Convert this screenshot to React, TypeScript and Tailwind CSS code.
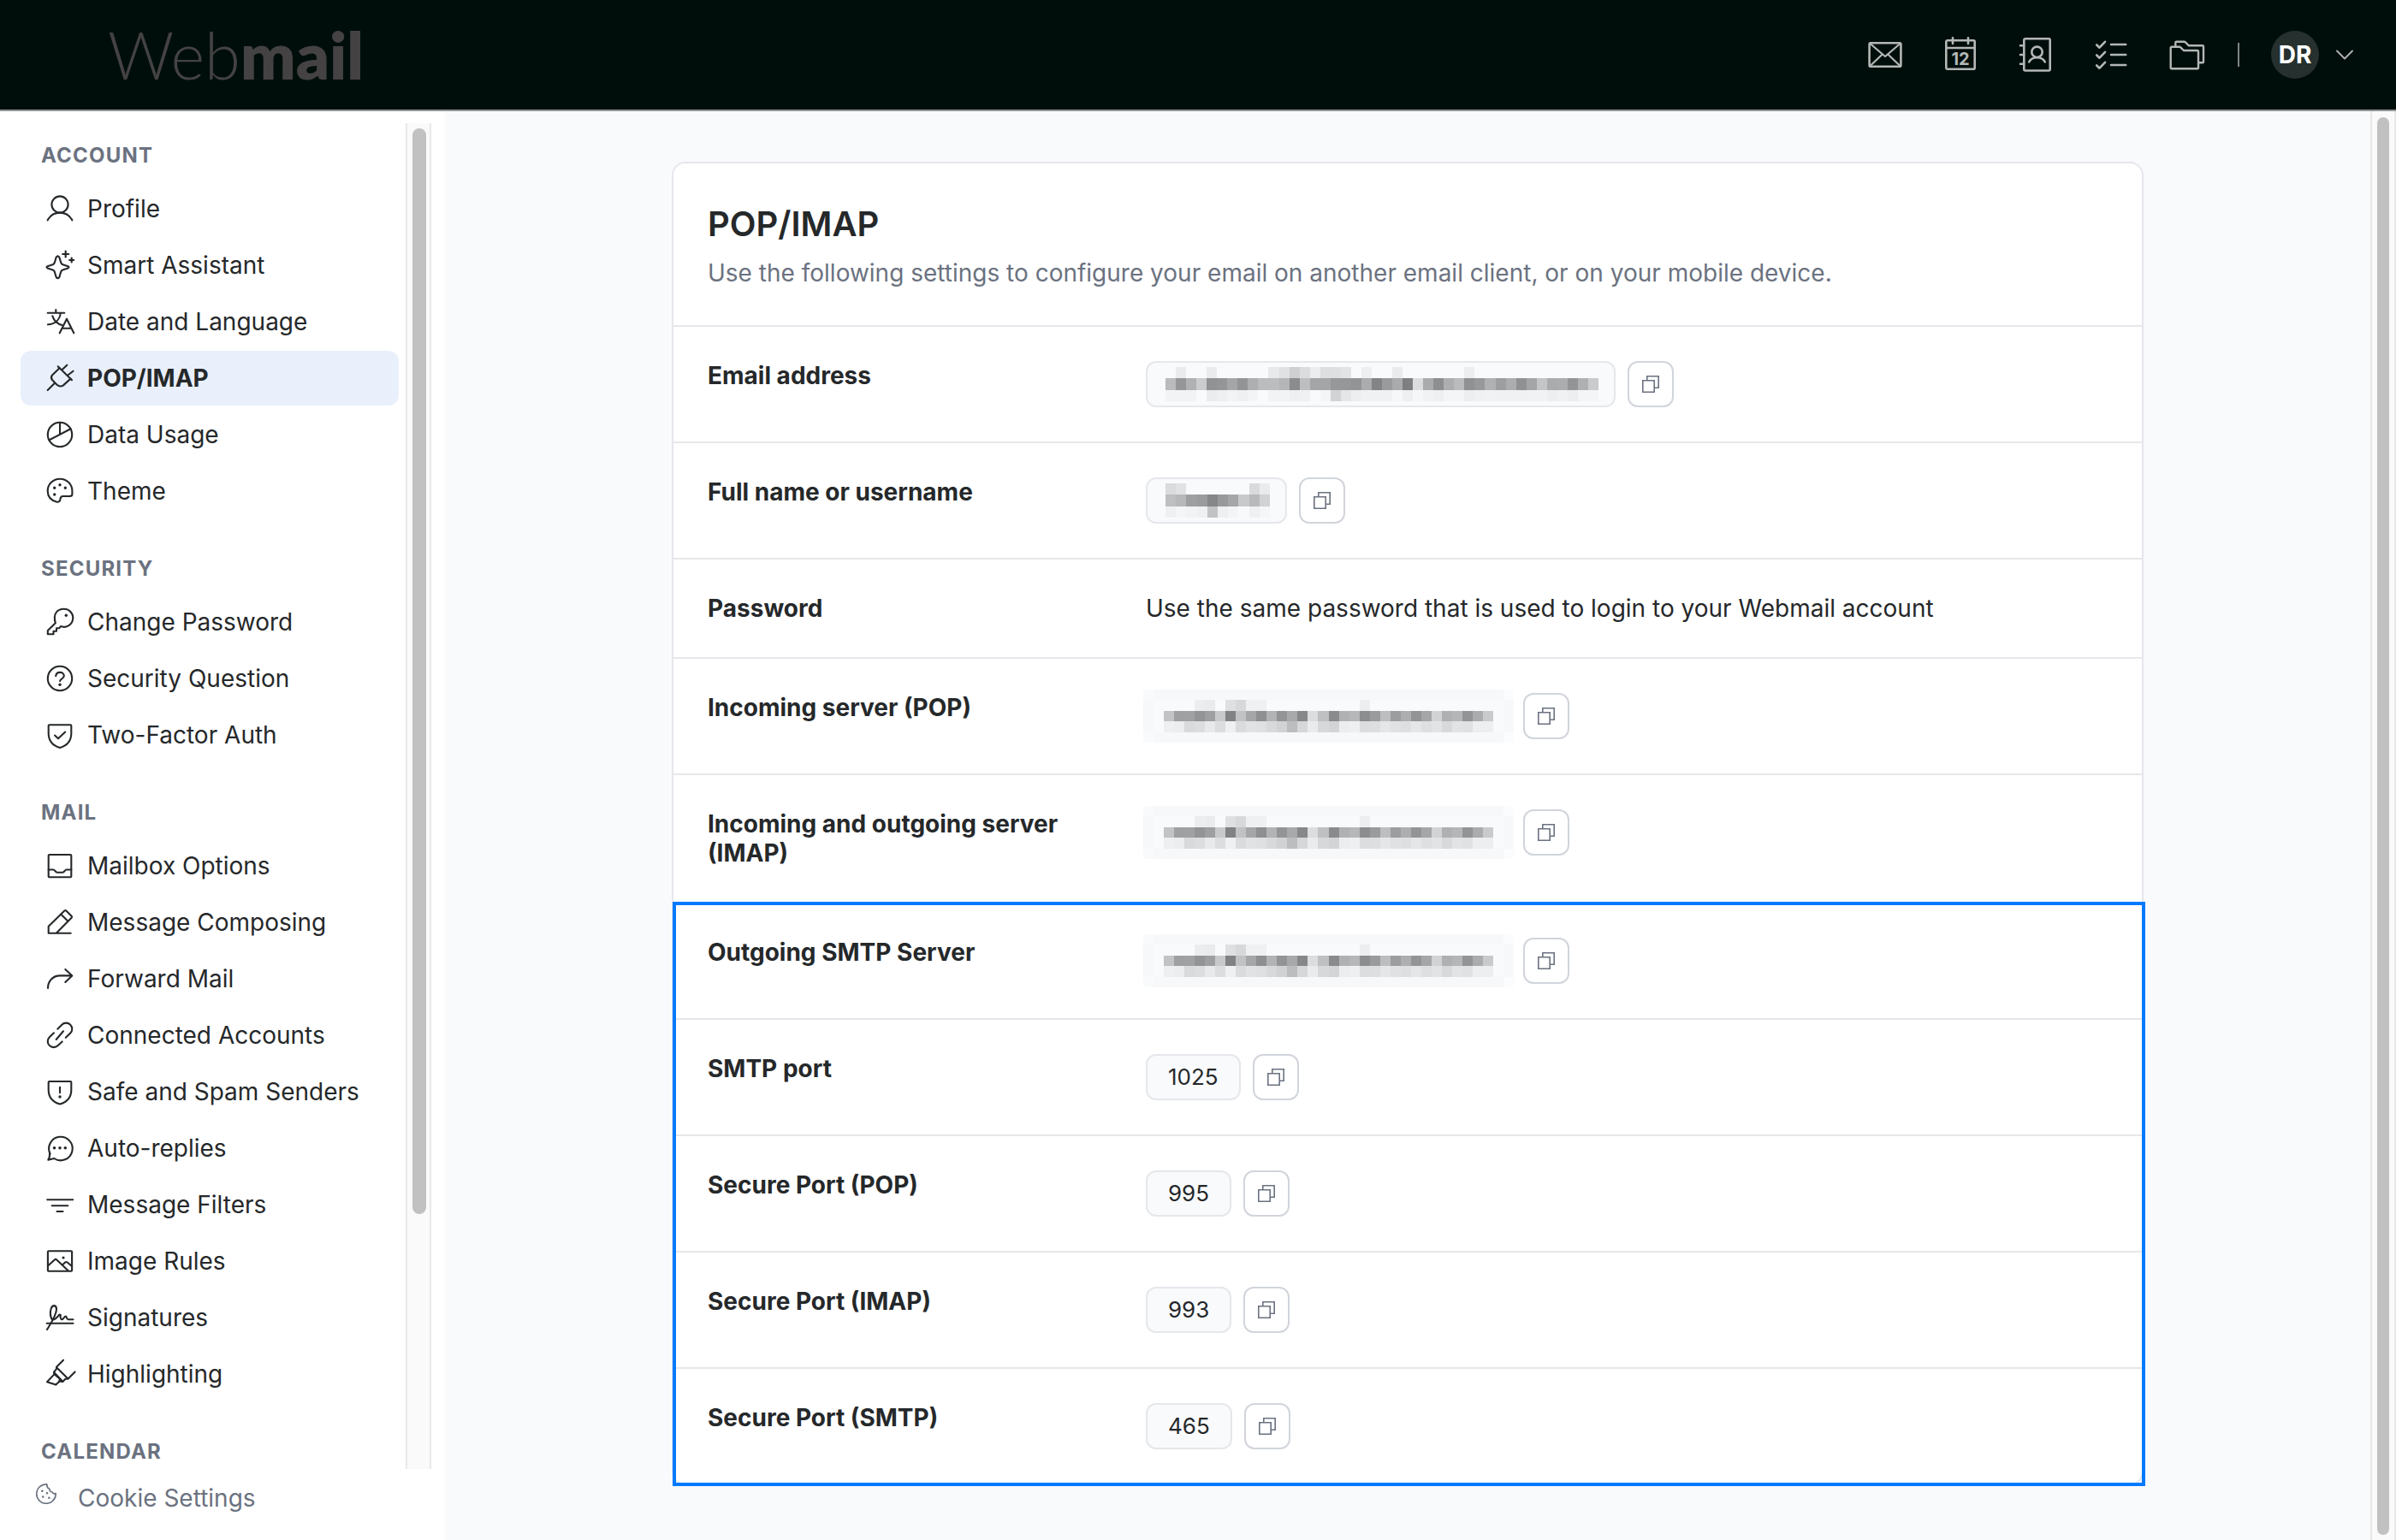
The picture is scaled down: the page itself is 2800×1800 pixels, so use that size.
import { useState } from "react";
import type { ReactNode } from "react";

const icons: Record<string, ReactNode> = {
  profile: (
    <>
      <circle cx="16" cy="11" r="9.6" />
      <path d="M1.7 29.3C4.6 24 10 20.6 16 20.6S27.4 24 30.3 29.3" />
    </>
  ),
  sparkles: (
    <>
      <path d="M11.7 6.6q1.8-2.4 3.6 0l2 6.6q.5 1.5 2 2l6.2 2q2 1.1 0 2.2l-6.2 2q-1.5.5-2 2l-2 6.6q-1.8 2.4-3.6 0l-2-6.6q-.5-1.5-2-2l-6.2-2q-2-1.1 0-2.2l6.2-2q1.500-.5 2-2z" />
      <path d="M22.700-.5v7M19.200 3h7M29.700 7.500v5M27.200 10h5" strokeWidth="2.200" />
    </>
  ),
  language: (
    <>
      <path d="M11.300 2v3.700M1.700 5.700h19.600M16.700 6C16 13.500 10.500 18.500 2 19.300M7.300 9.300C9 14.500 13 18.500 18.700 20" />
      <path d="M15.700 29.300 24 12.700l8.300 16.600M18.500 23.700h11" />
    </>
  ),
  plug: (
    <>
      <path d="M1.700 30l8-8M13.700 2.300 30 18.300M19 5.700l5.300-5M25.700 12.300l5.800-4.600" />
      <path d="M15.500 4.200 7 12.500q-2.200 2.800 0 5.500l5.500 5.700q3.500 3 7.200.9l8.800-8" />
    </>
  ),
  pie: (
    <>
      <circle cx="16" cy="16" r="14.200" />
      <path d="M16 1.800V16M3.600 22.300 28.600 9.300" />
    </>
  ),
  palette: (
    <>
      <path d="M16 1.700C24 1.700 30.400 8 30.400 16v3.500c0 1.700-1 2.500-2.600 2.500h-8.300c-2.600 0-2.900 1.300-3.100 3.600-.2 2.500-1.900 3.500-4.400 3C5.300 26.800 1.700 21.800 1.700 15.800 1.700 8 8 1.700 16 1.700z" />
      <path d="M9.700 12.300h.01M16 8.700h.01M22.300 12.300h.01M9.700 20h.01" strokeWidth="3.400" />
    </>
  ),
  key: (
    <>
      <path d="M10.800 17.300C7.500 6.500 13 .8 20.700.8A10.500 10.500 0 1 1 17 21.100l-2 2.200h-3v3.400H8.500v3.600H1.800V26z" />
      <path d="M23.300 8.300h.01" strokeWidth="3.400" />
    </>
  ),
  question: (
    <>
      <circle cx="16" cy="16" r="14.200" />
      <path d="M11.200 13.200c.3-2.800 2.200-4.300 4.900-4.300 2.600 0 4.700 1.700 4.700 4.200 0 3.600-4.700 2.800-4.700 6" />
      <path d="M16 23.300h.01" strokeWidth="3.400" />
    </>
  ),
  shieldCheck: (
    <>
      <path d="M3.700 4.300h24.600q1 0 1 1V14C29.300 22.500 24.500 28.500 16 31 7.500 28.500 2.700 22.500 2.700 14V5.300q0-1 1-1z" />
      <path d="M10 16.500l4 3.800 8.200-7.800" />
    </>
  ),
  inbox: (
    <>
      <rect x="2.700" y="3" width="26.600" height="26.200" rx="1" />
      <path d="M2.700 20.500h5.600c1.900 0 2.200 3.300 4.700 3.300h6c2.500 0 2.800-3.300 4.700-3.300h5.600" />
    </>
  ),
  compose: (
    <>
      <path d="M28.700 28.700h-26v-8L21.600 2.300q.8-.6 1.500 0L29.800 9q.6.700 0 1.400L12 28.400" />
      <path d="M17.300 6.700l7.900 7.900" />
    </>
  ),
  forward: <path d="M2 27c0-8.500 6-14.600 14-14.600h14M22.300 5l8 7.400-8 7.600" />,
  link: (
    <path d="M11.700 21 20 11.300M13.300 8.700l5-5a7 7 0 0 1 9.900 0 7 7 0 0 1 0 9.900l-5.400 5.200M9 13.300l-5.200 4.900a7 7 0 0 0 0 9.900 7 7 0 0 0 9.900 0l5-4.700" />
  ),
  shieldAlert: (
    <>
      <path d="M3.700 4h24.600q1 0 1 1v9C29.300 22.200 24.500 28 16 30.600 7.500 28 2.700 22.200 2.700 14V5q0-1 1-1z" />
      <path d="M16 10.700v6.600" />
      <path d="M16 22h.01" strokeWidth="3.400" />
    </>
  ),
  chat: (
    <>
      <path d="M4.600 22.700A13.800 13.800 0 1 1 9.300 28L2.300 29.700q2.200-3 1.700-7.600" />
      <path d="M9.500 15.800h.01M16 15.800h.01M22.300 15.800h.01" strokeWidth="3.600" />
    </>
  ),
  filters: <path d="M1.200 10.300h30M6.700 17.200h18.600M12.500 24h7" />,
  image: (
    <>
      <rect x="1.900" y="4.300" width="28.200" height="23.400" rx="1" />
      <path d="M2 21.500l8-7.300q1-.8 2 0L25.500 27M19.200 20.300l3.200-3q1-.7 2 0L30 22" />
      <path d="M20 12h.01" strokeWidth="3.200" />
    </>
  ),
  signature: (
    <>
      <path d="M1 30C6 22 11.800 13.500 12 6.500 12 1 7.400.7 5.700 5.500 4.300 10 4.800 15 7 18.600c2.600.6 6-3 8.300-6l1.500.5c-.7 2 .1 4.600 1.400 5.200 1.500.2 3-4 4.800-3.800 1 .3.700 3.700 2.500 3.800h6" />
      <path d="M.7 22.800h30.800" />
    </>
  ),
  highlight: (
    <>
      <path d="M20-.3l-7.700 7.700-.5 3-2.800 3.300.3 2.700L1 25.200l10.300 3.400 4.200-4.200 3.700.5 3-3 3.700-.6 7.700-7.900" />
      <path d="M12 8.200 25.500 21.500M9.300 14.200l10 10.500M10 16.800l6 5-.7 2.500" />
    </>
  ),
};

const sections = [
  {
    title: "ACCOUNT",
    items: [
      ["profile", "Profile"],
      ["sparkles", "Smart Assistant"],
      ["language", "Date and Language"],
      ["plug", "POP/IMAP"],
      ["pie", "Data Usage"],
      ["palette", "Theme"],
    ],
  },
  {
    title: "SECURITY",
    items: [
      ["key", "Change Password"],
      ["question", "Security Question"],
      ["shieldCheck", "Two-Factor Auth"],
    ],
  },
  {
    title: "MAIL",
    items: [
      ["inbox", "Mailbox Options"],
      ["compose", "Message Composing"],
      ["forward", "Forward Mail"],
      ["link", "Connected Accounts"],
      ["shieldAlert", "Safe and Spam Senders"],
      ["chat", "Auto-replies"],
      ["filters", "Message Filters"],
      ["image", "Image Rules"],
      ["signature", "Signatures"],
      ["highlight", "Highlighting"],
    ],
  },
  { title: "CALENDAR", items: [] },
];

// redacted values, one hex grey level per block, "--" is empty
const EMAIL = [
  "-- eb -- -- eb -- -- -- -- -- e9 e1 cf dc ed de df e4 -- ef -- -- eb -- -- -- -- -- -- ee -- -- -- -- -- -- -- -- -- -- -- --",
  "bb 96 b1 cc 92 95 a6 94 ae bc bd b5 8c be a5 a5 98 97 94 ac 84 9b ab 7f dd ab 8e ae bb 91 99 b1 9e ad 91 a5 c5 ab ad 94 b0 cb",
  "f3 f3 f3 -- ec ef f3 f0 f4 -- f3 f3 ef f1 fa f5 d3 e6 ee f1 f1 f1 f7 ef f7 f2 ef f5 f5 ee f1 f2 f1 f1 f1 f2 f2 ee f1 ee f5 f5",
];
const NAME = [
  "db e2 -- -- -- -- -- -- da eb",
  "bf b8 9f 9b 87 99 a6 c9 b9 d2",
  "f0 f5 f3 f0 c3 ef f4 f9 f0 f6",
];
const SERVER = [
  "fa f8 f8 f8 f8 f8 f8 f8 f8 f8 f8 f8 f8 f8 f8 f8 f8 f8 f8 f8 f8 f8 f8 f8 f8 f8 f8 f8 f8 f8 f8 f8 f8 f8 f8 fc",
  "f8 -- -- -- -- ed eb -- e0 d8 f0 f0 -- -- -- -- -- -- -- -- -- ee -- -- -- -- -- -- -- -- -- -- -- -- -- f8",
  "f8 -- c3 a0 a1 94 9f c9 82 c2 a6 8f b3 94 a9 88 dd c0 8b b1 b7 8d 9b be 9d ae 94 a6 d3 b0 b6 94 ac ca -- f8",
  "f8 -- ef ed da dd e9 dd f0 db e2 e0 d9 d2 bd d7 eb d8 d4 ed ef dd de e6 e1 df e6 df e3 d9 e3 e1 ee ee -- f8",
  "fa f8 f8 f8 f8 f8 f8 f8 f8 f8 f8 f8 f8 f8 f8 f8 f8 f8 f8 f8 f8 f8 f8 f8 f8 f8 f8 f8 f8 f8 f8 f8 f8 f8 f8 fc",
];

function Mosaic({ rows, className, label }: { rows: string[]; className: string; label: string }) {
  const cols = rows[0].split(" ").length;
  return (
    <svg
      viewBox={`0 0 ${cols} ${rows.length}`}
      preserveAspectRatio="none"
      shapeRendering="crispEdges"
      className={className}
      role="img"
      aria-label={label}
    >
      {rows.map((row, y) =>
        row.split(" ").map((cell, x) => {
          if (cell === "--") return null;
          const v = parseInt(cell, 16);
          return <rect key={`${x}-${y}`} x={x} y={y} width="1" height="1" fill={`rgb(${v - 1},${v},${v + 2})`} />;
        })
      )}
    </svg>
  );
}

function HeaderIcon({ label, children }: { label: string; children: ReactNode }) {
  return (
    <a href="#" aria-label={label} className="text-[#b3b7b5]">
      <svg viewBox="0 0 44 44" className="size-11" fill="none" stroke="currentColor" strokeWidth="2.600" strokeLinecap="round" strokeLinejoin="round">
        {children}
      </svg>
    </a>
  );
}

function Header() {
  return (
    <header className="flex h-[130px] shrink-0 items-center justify-between border-b-2 border-[#8f9391] bg-[#000e0b] pr-[50px] pl-[126px]">
      <a href="#" className="font-['Lato',sans-serif] text-[76px] leading-[90px] font-light text-[#444243]">
        Web<span className="font-extrabold">mail</span>
      </a>
      <div className="flex items-center">
        <nav className="flex items-center gap-11">
          <HeaderIcon label="Mail">
            <rect x="3.600" y="8.300" width="36.800" height="27.400" rx="1.500" />
            <path d="M4.500 9 22 24 39.500 9M4.500 35 18.700 21.500M39.500 35 25.300 21.500" strokeWidth="2.200" />
          </HeaderIcon>
          <HeaderIcon label="Calendar">
            <rect x="5.300" y="5.300" width="33.400" height="33.400" rx="1.500" />
            <path d="M5.300 14h33.400M13 2.200V9M31 2.200V9" />
            <text x="22" y="33.500" textAnchor="middle" fill="currentColor" stroke="none" fontSize="20" fontWeight="700" fontFamily="Inter, sans-serif">
              12
            </text>
          </HeaderIcon>
          <HeaderIcon label="Contacts">
            <rect x="8.300" y="3.300" width="30.400" height="37.200" rx="1.500" />
            <path d="M4 11.300h4M4 22h4M4 32.700h4M14.200 30.400C16 27 19.500 25.300 23.500 25.300s7.500 1.700 9.300 5.100" />
            <circle cx="23.500" cy="18.800" r="6.200" />
          </HeaderIcon>
          <HeaderIcon label="Tasks">
            <path d="M5.200 10.500l3.300 3.200L15 6.800M5.200 22.500l3.300 3.200 6.500-6.900M5.200 34.500l3.300 3.200 6.500-6.900M22 10h17.200M22 22h17.200M22 34h17.200" />
          </HeaderIcon>
          <HeaderIcon label="Files">
            <path d="M3.700 14q0-1.300 1.300-1.300h8.700q1 0 1.600.7l3.600 3.600H34.700q1.300 0 1.300 1.300V37q0 1.300-1.300 1.300H5q-1.300 0-1.300-1.300z" strokeWidth="2.400" />
            <path d="M9.300 12V7.700q0-1 1-1h9q1 0 1.600.6l4 4H41q1 0 1 1v18q0 1-1 1h-4.500" strokeWidth="2.400" />
          </HeaderIcon>
        </nav>
        <div className="ml-[38px] h-7 w-0.5 bg-[#7f8583]" />
        <button aria-label="Account menu" className="ml-[37px] flex items-center gap-5">
          <span className="flex size-14 items-center justify-center rounded-full bg-[#26312f] text-[28px] font-bold text-white">
            DR
          </span>
          <svg viewBox="0 0 20 12" className="h-3 w-5" fill="none" stroke="#b3b7b5" strokeWidth="1.800" strokeLinecap="round" strokeLinejoin="round">
            <path d="M1 1.500l9 9 9-9" />
          </svg>
        </button>
      </div>
    </header>
  );
}

function Sidebar() {
  const [active, setActive] = useState("POP/IMAP");

  return (
    <aside className="flex w-[520px] shrink-0 flex-col bg-white pt-3.5 pr-4">
      <div className="flex min-h-0 flex-1">
        <nav className="min-w-0 flex-1 overflow-hidden pt-[21px] pr-2 pl-6">
          {sections.map((s) => (
            <section key={s.title} className="mb-[42px]">
              <h2 className="mb-[13px] pl-6 text-[24px] leading-[34px] font-bold tracking-wider text-[#6b7280]">{s.title}</h2>
              <ul className="flex flex-col gap-0.5">
                {s.items.map(([icon, name]) => (
                  <li key={name}>
                    <a
                      href="#"
                      onClick={() => setActive(name)}
                      className={
                        "flex h-16 items-center gap-4 rounded-xl pl-[30px] text-[28px] " +
                        (active === name ? "bg-[#e9f0fb] font-bold" : "")
                      }
                    >
                      <svg viewBox="0 0 32 32" className="size-8 shrink-0 overflow-visible" fill="none" stroke="currentColor" strokeWidth="2.100" strokeLinecap="round" strokeLinejoin="round">
                        {icons[icon]}
                      </svg>
                      {name}
                    </a>
                  </li>
                ))}
              </ul>
            </section>
          ))}
        </nav>
        <div className="w-[30px] border-x-2 border-[#e8e8e8] bg-[#fafafa] px-1.5 pt-1.5">
          <div className="h-[81%] w-4 rounded-full bg-[#c1c1c1]" />
        </div>
      </div>
      <a href="#" className="flex h-[83px] shrink-0 items-start gap-[25px] pt-[17px] pl-[42px] text-[28px] leading-[34px] text-[#6b7280]">
        <svg viewBox="0 0 24 24" className="size-6" fill="none" stroke="currentColor" strokeWidth="1.700" strokeLinecap="round" strokeLinejoin="round">
          <path d="M12.800.9a11.200 11.200 0 1 0 10.300 10.700q-2.500.8-4.200-1.700-3-.2-2.800-3.200-3.800-1.700-3.300-5.800z" />
          <path d="M7.300 8.800h.01M13 11.300h.01M8.200 15.500h.01M15.300 16.700h.01" strokeWidth="2.600" />
        </svg>
        Cookie Settings
      </a>
    </aside>
  );
}

function CopyButton({ label }: { label: string }) {
  return (
    <button aria-label={`Copy ${label}`} className="flex size-[54px] items-center justify-center rounded-xl border-2 border-[#d1d5db] bg-white text-[#6b7280]">
      <svg viewBox="0 0 20 20" className="size-5" fill="none" stroke="currentColor" strokeWidth="1.600">
        <path d="M.8 5.800h13.400v13.400H.8zM5.800 5.500V.8h13.400v13.400h-4.700" />
      </svg>
    </button>
  );
}

function Chip({ children }: { children: ReactNode }) {
  return (
    <span className="flex h-[54px] items-center rounded-xl border-2 border-[#e5e7eb] bg-[#f9fafc] text-[26px]">{children}</span>
  );
}

function Row({ label, copy = true, children }: { label: string; copy?: boolean; children: ReactNode }) {
  return (
    <div className="grid grid-cols-[472px_1fr] gap-10 border-t-2 border-[#e5e7eb] px-10 py-10 text-[28px] leading-[34px]">
      <dt className="font-bold">{label}</dt>
      <dd className="flex items-start gap-3.5">
        {children}
        {copy && <CopyButton label={label} />}
      </dd>
    </div>
  );
}

function ServerValue({ label }: { label: string }) {
  return <Mosaic rows={SERVER} label={label} className="-mx-[3px] -my-1 h-[62px] w-[433px] bg-[#f9fafc]" />;
}

const ports = [
  ["SMTP port", "1025"],
  ["Secure Port (POP)", "995"],
  ["Secure Port (IMAP)", "993"],
  ["Secure Port (SMTP)", "465"],
];

export default function App() {
  return (
    <div className="flex h-screen flex-col overflow-hidden bg-[#f9fafc] font-['Inter',sans-serif] text-[#25282a]">
      <Header />
      <div className="flex min-h-0 flex-1">
        <Sidebar />
        <main className="min-w-0 flex-1 px-10 pt-[59px]">
          <section className="mx-auto w-full max-w-[1720px] rounded-2xl border-2 border-[#e5e7eb] bg-white">
            <div className="px-10 pt-[47px] pb-11">
              <h1 className="text-[40px] leading-[48px] font-semibold">POP/IMAP</h1>
              <p className="mt-4 text-[28px] leading-[34px] text-[#6b7280]">
                Use the following settings to configure your email on another email client, or on your mobile device.
              </p>
            </div>
            <dl>
              <Row label="Email address">
                <Chip>
                  <Mosaic rows={EMAIL} label="Email address" className="mr-[18px] ml-[21px] h-10 w-[506px]" />
                </Chip>
              </Row>
              <Row label="Full name or username">
                <Chip>
                  <Mosaic rows={NAME} label="Full name" className="mr-[18px] ml-[21px] h-10 w-[122px]" />
                </Chip>
              </Row>
              <Row label="Password" copy={false}>
                Use the same password that is used to login to your Webmail account
              </Row>
              <Row label="Incoming server (POP)">
                <ServerValue label="POP server" />
              </Row>
              <Row label="Incoming and outgoing server (IMAP)">
                <ServerValue label="IMAP server" />
              </Row>
              <div className="relative">
                <Row label="Outgoing SMTP Server">
                  <ServerValue label="SMTP server" />
                </Row>
                {ports.map(([label, port]) => (
                  <Row key={label} label={label}>
                    <Chip>
                      <span className="px-6">{port}</span>
                    </Chip>
                  </Row>
                ))}
                <div className="pointer-events-none absolute top-0 -right-1 -bottom-[3px] -left-px border-4 border-[#007aff]" />
              </div>
            </dl>
          </section>
        </main>
        <div className="flex w-[30px] shrink-0 border-x-2 border-[#e8e8e8] bg-[#fafafa] px-1.5 pt-[7px] pb-1.5">
          <div className="w-4 rounded-full bg-[#c1c1c1]" />
        </div>
      </div>
    </div>
  );
}
